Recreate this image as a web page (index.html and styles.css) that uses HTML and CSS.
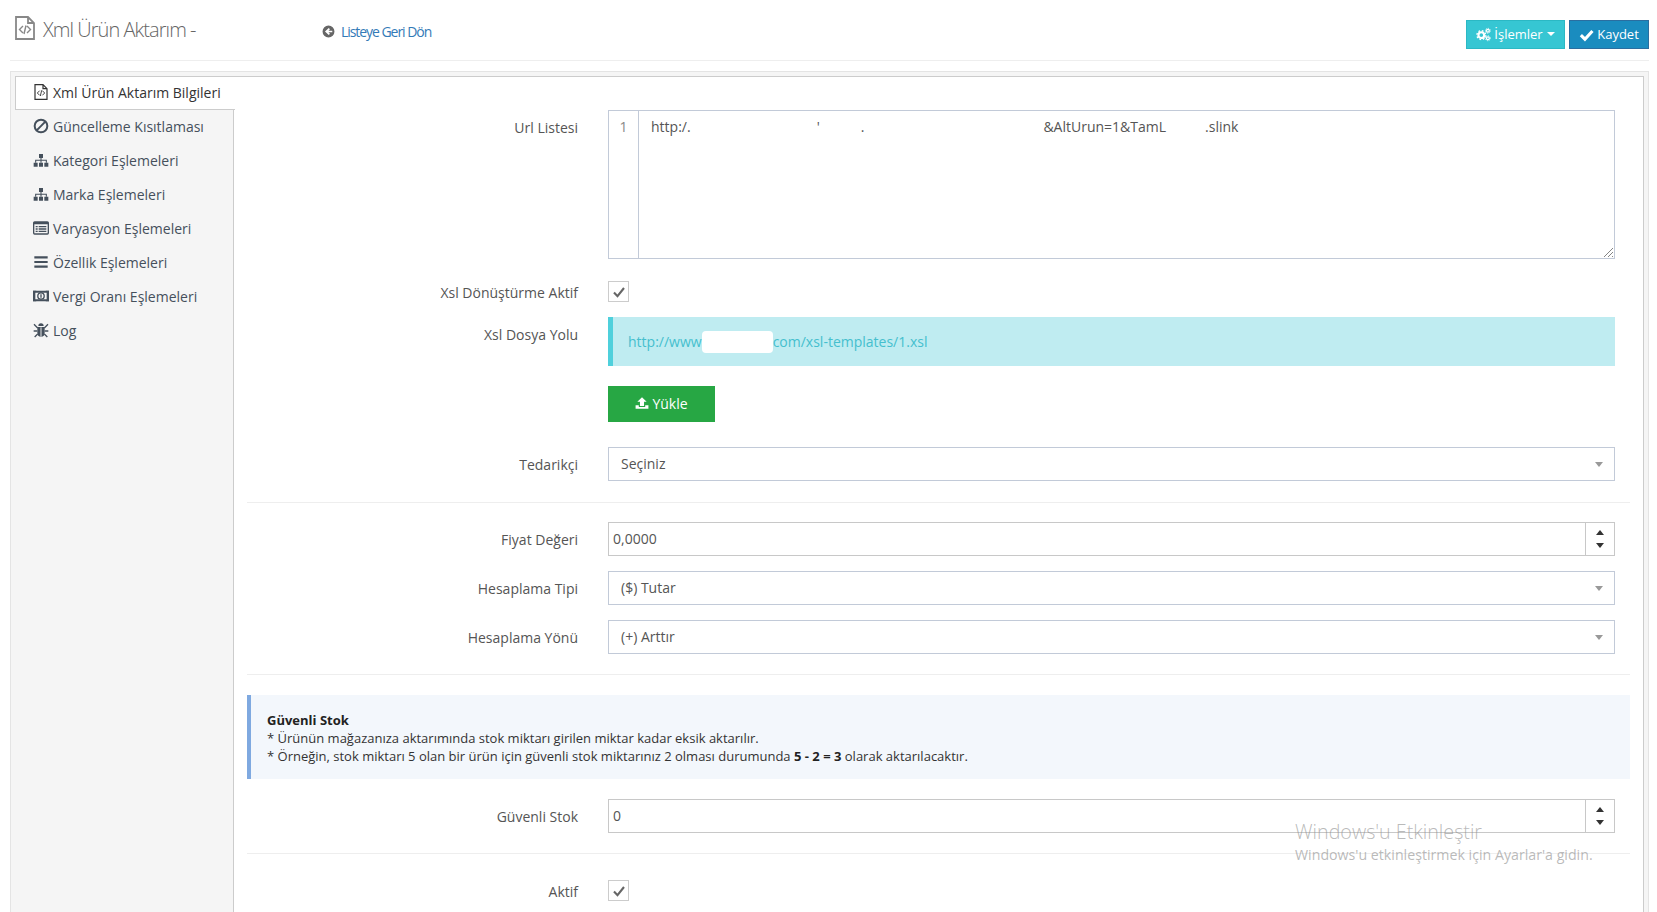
FILE: index.html
```html
<!DOCTYPE html>
<html lang="tr">
<head>
  <meta charset="UTF-8" />
  <title>Xml Ürün Aktarım</title>
  <link rel="stylesheet" href="styles.css">
</head>
<body>
  <svg class="sprite" xmlns="http://www.w3.org/2000/svg">
    <symbol id="i-file-code" viewBox="0 0 24 24">
      <path d="M3 1h12l6 6v16H3z M15 1v6h6" fill="none" stroke="currentColor" stroke-width="1.8"/>
      <path d="M10 10l-3.500 3.500L10 17 M14 10l3.500 3.500L14 17 M13 9.500l-2 8.500" fill="none" stroke="currentColor" stroke-width="1.400"/>
    </symbol>
    <symbol id="i-ban" viewBox="0 0 24 24">
      <circle cx="12" cy="12" r="9.500" fill="none" stroke="currentColor" stroke-width="3"/>
      <path d="M5.500 18.500l13-13" stroke="currentColor" stroke-width="3"/>
    </symbol>
    <symbol id="i-sitemap" viewBox="0 0 24 24">
      <path d="M9 3h6v6H9z M1 16h6v6H1z M9 16h6v6H9z M17 16h6v6h-6z" fill="currentColor"/>
      <path d="M12 9v7 M4 16v-3.500h16V16" fill="none" stroke="currentColor" stroke-width="1.600"/>
    </symbol>
    <symbol id="i-list-alt" viewBox="0 0 24 24">
      <rect x="1" y="3" width="22" height="18" rx="1.500" fill="none" stroke="currentColor" stroke-width="2"/>
      <path d="M1 3h22v3.500H1z M4 9h3v2H4z M8.500 9H20v2H8.500z M4 12.500h3v2H4z M8.500 12.500H20v2H8.500z M4 16h3v2H4z M8.500 16H20v2H8.500z" fill="currentColor"/>
    </symbol>
    <symbol id="i-bars" viewBox="0 0 24 24">
      <path d="M2 3.500h20v3.200H2z M2 10.400h20v3.200H2z M2 17.300h20v3.200H2z" fill="currentColor"/>
    </symbol>
    <symbol id="i-money" viewBox="0 0 24 24">
      <path fill-rule="evenodd" d="M0 4h24v16H0z M3.500 7v10h17V7z" fill="currentColor"/>
      <path d="M0 4h5L0 9z M24 4h-5l5 5z M0 20h5l-5-5z M24 20h-5l5-5z" fill="currentColor"/>
      <circle cx="12" cy="12" r="4.800" fill="none" stroke="currentColor" stroke-width="2"/>
      <path d="M11 9.500h2v5h-2z" fill="currentColor"/>
    </symbol>
    <symbol id="i-bug" viewBox="0 0 24 24">
      <path d="M8 6a4 4 0 0 1 8 0z M6.500 7.500h11V16a5.500 6 0 0 1-11 0z" fill="currentColor"/>
      <path d="M1.500 3.500l5.500 5.500 M22.500 3.500L17 9 M1 13.500h5.500 M23 13.500h-5.500 M2.500 22.500L7 18 M21.500 22.500L17 18" stroke="currentColor" stroke-width="2" fill="none"/>
      <path d="M12 8v14" stroke="#f4f4f4" stroke-width="1.400"/>
    </symbol>
    <symbol id="i-cogs" viewBox="0 0 24 24">
      <circle cx="8.500" cy="13" r="4.600" fill="none" stroke="currentColor" stroke-width="3.400"/>
      <circle cx="8.500" cy="13" r="7" fill="none" stroke="currentColor" stroke-width="2.200" stroke-dasharray="2.700 2.800"/>
      <circle cx="19" cy="6" r="2.300" fill="none" stroke="currentColor" stroke-width="2"/>
      <circle cx="19" cy="6" r="3.900" fill="none" stroke="currentColor" stroke-width="1.600" stroke-dasharray="1.500 1.560"/>
      <circle cx="19" cy="18" r="2.300" fill="none" stroke="currentColor" stroke-width="2"/>
      <circle cx="19" cy="18" r="3.900" fill="none" stroke="currentColor" stroke-width="1.600" stroke-dasharray="1.500 1.560"/>
    </symbol>
    <symbol id="i-check" viewBox="0 0 24 24">
      <path d="M3 13l6.500 6.500L21.500 6.500" fill="none" stroke="currentColor" stroke-width="5"/>
    </symbol>
    <symbol id="i-tick" viewBox="0 0 24 24">
      <path d="M2 13l7 7.500L22 4" fill="none" stroke="currentColor" stroke-width="4.200"/>
    </symbol>
    <symbol id="i-upload" viewBox="0 0 24 24">
      <path d="M12 2l8 8h-4.500v7h-7v-7H4z M1 16h5.500v3h11v-3H23v6H1z" fill="currentColor"/>
    </symbol>
    <symbol id="i-back" viewBox="0 0 24 24">
      <path fill-rule="evenodd" d="M12 1a11 11 0 1 0 0 22a11 11 0 0 0 0-22z M12.500 5.500l2.200 2.200-2.800 2.800H19v3h-7.100l2.800 2.800-2.200 2.200L5.500 12z" fill="currentColor"/>
    </symbol>
  </svg>

  <header class="page-head">
    <div class="head-title">
      <svg class="title-icon"><use href="#i-file-code"/></svg>
      <h1>Xml Ürün Aktarım -</h1>
    </div>
    <a class="back-link" href="#"><svg class="back-icon"><use href="#i-back"/></svg><span>Listeye Geri Dön</span></a>
    <div class="head-actions">
      <button class="btn btn-ops"><svg class="ico"><use href="#i-cogs"/></svg>İşlemler<i class="caret"></i></button>
      <button class="btn btn-save"><svg class="ico"><use href="#i-check"/></svg>Kaydet</button>
    </div>
  </header>

  <div class="panel">
    <ul class="tabs">
      <li class="active"><svg class="ico"><use href="#i-file-code"/></svg>Xml Ürün Aktarım Bilgileri</li>
      <li><svg class="ico"><use href="#i-ban"/></svg>Güncelleme Kısıtlaması</li>
      <li><svg class="ico"><use href="#i-sitemap"/></svg>Kategori Eşlemeleri</li>
      <li><svg class="ico"><use href="#i-sitemap"/></svg>Marka Eşlemeleri</li>
      <li><svg class="ico"><use href="#i-list-alt"/></svg>Varyasyon Eşlemeleri</li>
      <li><svg class="ico"><use href="#i-bars"/></svg>Özellik Eşlemeleri</li>
      <li><svg class="ico"><use href="#i-money"/></svg>Vergi Oranı Eşlemeleri</li>
      <li><svg class="ico"><use href="#i-bug"/></svg>Log</li>
    </ul>

    <main class="tab-body">
      <div class="row gap-22">
        <label>Url Listesi</label>
        <div class="code-box">
          <div class="gutter">1</div>
          <div class="code-line"><span>http:/.</span><span class="frag-a">'</span><span class="frag-d">.</span><span class="frag-b">&amp;AltUrun=1&amp;TamL</span><span class="frag-c">.slink</span></div>
          <svg class="grip" viewBox="0 0 9 9"><path d="M0 9l9-9 M4 9l5-5 M8 9l1-1" stroke="#666" stroke-width="0.800"/></svg>
        </div>
      </div>

      <div class="row row-check gap-15">
        <label>Xsl Dönüştürme Aktif</label>
        <span class="check-box"><svg class="box-check"><use href="#i-tick"/></svg></span>
      </div>

      <div class="row gap-20">
        <label class="label-high">Xsl Dosya Yolu</label>
        <div class="alert-info"><span>http://www</span><span class="blot"></span><span>com/xsl-templates/1.xsl</span></div>
      </div>

      <div class="row gap-25">
        <label></label>
        <button class="btn-upload"><svg class="ico"><use href="#i-upload"/></svg>Yükle</button>
      </div>

      <div class="row gap-21">
        <label>Tedarikçi</label>
        <div class="select">Seçiniz<i class="select-arrow"></i></div>
      </div>

      <hr class="sep">

      <div class="row gap-15">
        <label>Fiyat Değeri</label>
        <div class="number"><span>0,0000</span><div class="spin"><i class="up"></i><i class="down"></i></div></div>
      </div>

      <div class="row gap-15">
        <label>Hesaplama Tipi</label>
        <div class="select">($) Tutar<i class="select-arrow"></i></div>
      </div>

      <div class="row gap-20">
        <label>Hesaplama Yönü</label>
        <div class="select">(+) Arttır<i class="select-arrow"></i></div>
      </div>

      <hr class="sep sep-note">

      <div class="note">
        <strong>Güvenli Stok</strong><br>
        * Ürünün mağazanıza aktarımında stok miktarı girilen miktar kadar eksik aktarılır.<br>
        * Örneğin, stok miktarı 5 olan bir ürün için güvenli stok miktarınız 2 olması durumunda <strong>5 - 2 = 3</strong> olarak aktarılacaktır.
      </div>

      <div class="row gap-20">
        <label>Güvenli Stok</label>
        <div class="number"><span>0</span><div class="spin"><i class="up"></i><i class="down"></i></div></div>
      </div>

      <hr class="sep sep-tall">

      <div class="row row-check">
        <label>Aktif</label>
        <span class="check-box"><svg class="box-check"><use href="#i-tick"/></svg></span>
      </div>
    </main>
  </div>

  <div class="win-mark">
    <div class="win-title">Windows'u Etkinleştir</div>
    <div class="win-sub">Windows'u etkinleştirmek için Ayarlar'a gidin.</div>
  </div>
</body>
</html>
```

FILE: styles.css
```css
/* Base */
html, body { height:100%; }
body { margin:0; overflow:hidden; background:#fff; font-family:"Open Sans", sans-serif; font-size:14px; color:#555; position:relative; }
a { text-decoration:none; color:inherit; }
.sprite { display:none; }
.ico { width:16px; height:16px; flex:none; }

/* Header */
.page-head { height:61px; margin-left:10px; margin-right:8px; border-bottom:1px solid #eee; display:flex; align-items:center; box-sizing:border-box; }
.head-title { width:312px; display:flex; align-items:center; }
.title-icon { width:24px; height:24px; margin:-4px 0 0 3px; color:#888; }
.head-title h1 { margin:-2px 0 0 6px; font-size:20px; font-weight:300; letter-spacing:-0.95px; color:#666; }
.back-link { display:flex; align-items:center; color:#337ab7; font-size:14px; letter-spacing:-1.05px; margin-top:2px; }
.back-icon { width:13px; height:13px; margin-right:6px; color:#666; }
.head-actions { margin-left:auto; display:flex; gap:4px; margin-top:8px; }
.btn { height:29px; border:1px solid transparent; color:#fff; font:13px "Open Sans", sans-serif; display:flex; align-items:center; justify-content:center; padding:0; }
.btn .ico { width:15px; height:15px; margin-right:3px; }
.btn-ops { width:99px; background:#36c6d3; border-color:#2bb8c4; }
.btn-save { width:80px; background:#1a8cbf; border-color:#2a6ea0; }
.caret { width:0; height:0; margin-left:4px; border-top:4px solid #fff; border-left:4px solid transparent; border-right:4px solid transparent; }

/* Panel and tabs */
.panel { margin:10px 8px 0 10px; height:841px; box-sizing:border-box; display:flex; background:#f5f5f5; border:1px solid #e4e4e4; border-bottom:0; padding:4px 4px 0 0; }
.tabs { list-style:none; margin:0; padding:0; width:223px; flex:none; box-sizing:border-box; border-right:1px solid #ccc; color:#45505c; }
.tabs li { height:32px; margin-bottom:2px; display:flex; align-items:center; padding-left:22px; gap:4px; position:relative; }
.tabs li.active { background:#fff; color:#333; border:1px solid #ccc; border-right:0; margin-left:4px; padding-left:17px; padding-bottom:2px; width:220px; box-sizing:border-box; height:34px; margin-bottom:0; z-index:1; }
.tab-body { flex:1; background:#fff; border-top:1px solid #ccc; border-right:1px solid #ccc; padding:33px 13px 0 13px; }

/* Form rows */
.row { display:flex; margin-right:15px; }
.row > label { width:331px; height:34px; margin-right:30px; flex:none; text-align:right; line-height:35px; }
.row > label.label-high { line-height:36px; }
.row-check > label { height:21px; line-height:24px; }
.gap-15 { margin-bottom:15px; }
.gap-20 { margin-bottom:20px; }
.gap-21 { margin-bottom:21px; }
.gap-22 { margin-bottom:22px; }
.gap-25 { margin-bottom:25px; }
.sep { border:0; border-top:1px solid #eee; margin:0 0 19px; }
.sep-note { margin-bottom:20px; }
.sep-tall { margin-bottom:26px; }

/* Fields */
.code-box { flex:1; height:149px; box-sizing:border-box; border:1px solid #c2cad8; display:flex; position:relative; color:#555; }
.gutter { width:30px; border-right:1px solid #c2cad8; text-align:center; color:#888; line-height:32px; box-sizing:border-box; }
.code-line { padding-left:12px; line-height:32px; white-space:nowrap; display:flex; }
.frag-a { margin-left:126px; }
.frag-d { margin-left:41px; }
.frag-b { margin-left:179px; }
.frag-c { margin-left:39px; }
.grip { position:absolute; right:1px; bottom:1px; width:9px; height:9px; }
.check-box { width:21px; height:21px; box-sizing:border-box; border:1px solid #ccc; display:flex; align-items:center; justify-content:center; }
.box-check { width:12px; height:12px; color:#666; }
.alert-info { flex:1; height:49px; box-sizing:border-box; border-left:5px solid #4fd0dc; background:#bfecf1; color:#45bfce; padding-left:15px; display:flex; align-items:center; }
.blot { width:71px; height:22px; background:#fff; border-radius:4px; }
.btn-upload { width:107px; height:36px; border:0; background:#27a744; color:#fff; font:14px "Open Sans", sans-serif; display:flex; align-items:center; justify-content:center; gap:3px; padding:0 0 2px; }
.btn-upload .ico { width:14px; height:14px; }
.select { flex:1; height:34px; box-sizing:border-box; border:1px solid #c2cad8; padding-left:12px; line-height:32px; position:relative; }
.select-arrow { position:absolute; right:11px; top:14px; width:0; height:0; border-top:5px solid #999; border-left:4px solid transparent; border-right:4px solid transparent; }
.number { flex:1; height:34px; box-sizing:border-box; border:1px solid #c8c8c8; padding-left:4px; line-height:32px; display:flex; justify-content:space-between; }
.spin { width:29px; box-sizing:border-box; border-left:1px solid #c8c8c8; display:flex; flex-direction:column; align-items:center; justify-content:center; gap:8px; }
.spin i { width:0; height:0; border-left:4px solid transparent; border-right:4px solid transparent; }
.spin .up { border-bottom:5px solid #333; }
.spin .down { border-top:5px solid #333; }

/* Note */
.note { height:84px; box-sizing:border-box; margin-bottom:20px; background:#f3f7fc; border-left:4px solid #7fa9e0; padding:16px 0 0 16px; font-size:13px; line-height:18px; color:#333; }
.note strong { color:#222; }

/* Windows watermark */
.win-mark { position:absolute; left:1295px; top:819px; color:rgba(140,140,140,.6); pointer-events:none; }
.win-title { font-size:19.700px; font-weight:300; line-height:26px; }
.win-sub { font-size:14.200px; line-height:20px; }
```
